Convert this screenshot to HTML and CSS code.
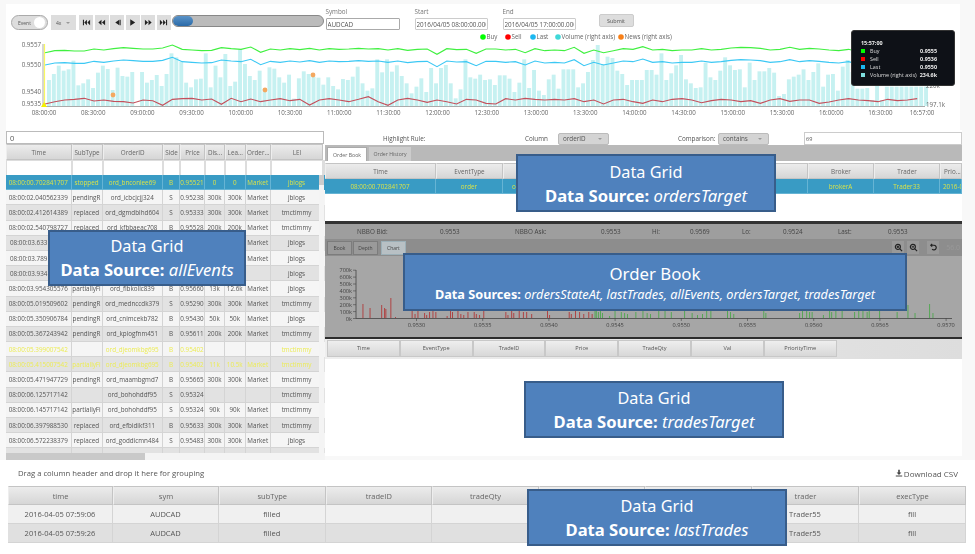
FILE: index.html
```html
<!doctype html>
<html>
  <head>
    <link rel="stylesheet" href="styles.css">
    <script src="charts.js" defer></script>
  </head>

  <body>
    <div class="app">
      <section class="top">
        <div class="toolbar">
          <div class="toggle"><span>Event</span><i></i></div>
          <div class="speed"><span>4x</span><b></b></div>
          <div class="controls">
            <button><svg viewBox="0 0 10 10"><path d="M1 2h1.2v6H1zM5.500 2v6L2.500 5zM9 2v6L6 5z"/></svg></button>
            <button><svg viewBox="0 0 10 10"><path d="M5 2v6L1.500 5zM9 2v6L5.500 5z"/></svg></button>
            <button><svg viewBox="0 0 10 10"><path d="M7 2v6L2.500 5zM7.500 2h1v6h-1z"/></svg></button>
            <button><svg viewBox="0 0 10 10"><path d="M2.500 1.500v7L8 5z"/></svg></button>
            <button><svg viewBox="0 0 10 10"><path d="M1 2v6L4.500 5zM5 2v6L8.500 5z"/></svg></button>
            <button><svg viewBox="0 0 10 10"><path d="M1 2v6L4 5zM4.500 2v6l3-3zM7.800 2H9v6H7.800z"/></svg></button>
          </div>
          <div class="slider"><i></i></div>
          <label class="field field-symbol">Symbol<input type="text" value="AUDCAD"></label>
          <label class="field field-start">Start<input type="text" value="2016/04/05 08:00:00.000"></label>
          <label class="field field-end">End<input type="text" value="2016/04/05 17:00:00.000"></label>
          <button class="submit">Submit</button>
        </div>
        <svg id="mainChart" class="main-chart" viewBox="6 32 954 98"></svg>
        <div class="tip">
          <strong>15:57:00</strong>
          <div><i class="sw-buy"></i><span>Buy</span><b>0.9555</b></div>
          <div><i class="sw-sell"></i><span>Sell</span><b>0.9536</b></div>
          <div><i class="sw-last"></i><span>Last</span><b>0.9550</b></div>
          <div><i class="sw-vol"></i><span>Volume (right axis)</span><b>234.6k</b></div>
        </div>
      </section>

      <div class="middle">
        <section class="events">
          <input class="search" type="text" value="0">
          <div class="grid-head ev-cols">
            <div>Time</div><div>SubType</div><div>OrderID</div><div>Side</div><div>Price</div><div>Dis...</div><div>Lea...</div><div>Order...</div><div>LEI</div>
          </div>
          <div class="filters ev-cols">
            <div><input></div><div><input></div><div><input></div><div><input></div><div><input></div><div><input></div><div><input></div><div><input></div><div><input></div>
          </div>
          <div class="ev-body">
            <div class="row ev-cols selected"><div>08:00:00.702841707</div><div>stopped</div><div>ord_bnconlee69</div><div>B</div><div>0.95521</div><div>0</div><div>0</div><div>Market</div><div>jblogs</div></div>
            <div class="row ev-cols"><div>08:00:02.040562339</div><div>pendingR</div><div>ord_icbcjcjj324</div><div>S</div><div>0.95238</div><div>300k</div><div>300k</div><div>Market</div><div>jblogs</div></div>
            <div class="row ev-cols"><div>08:00:02.412614389</div><div>replaced</div><div>ord_dgmdblhd604</div><div>S</div><div>0.95333</div><div>300k</div><div>300k</div><div>Market</div><div>tmctimmy</div></div>
            <div class="row ev-cols"><div>08:00:02.540798727</div><div>replaced</div><div>ord_kfbbaeac708</div><div>B</div><div>0.95528</div><div>200k</div><div>200k</div><div>Market</div><div>tmctimmy</div></div>
            <div class="row ev-cols"><div class="left cut">08:00:03.633</div><div></div><div></div><div></div><div></div><div></div><div></div><div>Market</div><div>jblogs</div></div>
            <div class="row ev-cols"><div class="left cut">08:00:03.789</div><div></div><div></div><div></div><div></div><div></div><div></div><div>Market</div><div>jblogs</div></div>
            <div class="row ev-cols"><div class="left cut">08:00:03.934</div><div></div><div></div><div></div><div></div><div></div><div></div><div></div><div>jblogs</div></div>
            <div class="row ev-cols"><div>08:00:03.954305576</div><div>partiallyFi</div><div>ord_fibkolic839</div><div>B</div><div>0.95660</div><div>13k</div><div>12.6k</div><div>Market</div><div>jblogs</div></div>
            <div class="row ev-cols"><div>08:00:05.019509602</div><div>pendingR</div><div>ord_mednccdk379</div><div>S</div><div>0.95290</div><div>300k</div><div>300k</div><div>Market</div><div>tmctimmy</div></div>
            <div class="row ev-cols"><div>08:00:05.350906784</div><div>pendingR</div><div>ord_cnimcekb782</div><div>B</div><div>0.95430</div><div>50k</div><div>50k</div><div>Market</div><div>jblogs</div></div>
            <div class="row ev-cols"><div>08:00:05.367243942</div><div>pendingR</div><div>ord_kpiogfnm451</div><div>B</div><div>0.95611</div><div>200k</div><div>200k</div><div>Market</div><div>tmctimmy</div></div>
            <div class="row ev-cols hit"><div>08:00:05.399007542</div><div></div><div>ord_djeomkbg695</div><div>B</div><div>0.95402</div><div></div><div></div><div></div><div>tmctimmy</div></div>
            <div class="row ev-cols hit"><div>08:00:05.415007542</div><div>partiallyFi</div><div>ord_djeomkbg695</div><div>B</div><div>0.95402</div><div>11k</div><div>10.5k</div><div>Market</div><div>tmctimmy</div></div>
            <div class="row ev-cols"><div>08:00:05.471947729</div><div>pendingR</div><div>ord_maambgmd7</div><div>B</div><div>0.95665</div><div>300k</div><div>300k</div><div>Market</div><div>tmctimmy</div></div>
            <div class="row ev-cols"><div>08:00:06.125717142</div><div></div><div>ord_bohohddf95</div><div>S</div><div>0.95324</div><div></div><div></div><div></div><div>tmctimmy</div></div>
            <div class="row ev-cols"><div>08:00:06.145717142</div><div>partiallyFi</div><div>ord_bohohddf95</div><div>S</div><div>0.95324</div><div>90k</div><div>90k</div><div>Market</div><div>tmctimmy</div></div>
            <div class="row ev-cols"><div>08:00:06.397988530</div><div>replaced</div><div>ord_efbidikf311</div><div>B</div><div>0.95633</div><div>300k</div><div>300k</div><div>Market</div><div>tmctimmy</div></div>
            <div class="row ev-cols"><div>08:00:06.572238379</div><div>replaced</div><div>ord_goddicmn484</div><div>S</div><div>0.95483</div><div>300k</div><div>300k</div><div>Market</div><div>jblogs</div></div>
            <div class="row ev-cols last-row"><div></div><div></div><div></div><div></div><div></div><div></div><div></div><div></div><div></div></div>
            <div class="vscroll"><i></i></div>
          </div>
          <div class="hscroll"><i></i></div>
        </section>

        <section class="detail">
          <div class="rule">
            <span class="rule-title">Highlight Rule:</span>
            <span class="rule-col">Column</span>
            <div class="pick pick-col"><span>orderID</span><b></b></div>
            <span class="rule-cmp">Comparison:</span>
            <div class="pick"><span>contains</span><b></b></div>
            <input class="rule-val" type="text" value="69">
          </div>
          <div class="tabs">
            <div class="tab active">Order Book</div>
            <div class="tab">Order History</div>
          </div>
          <div class="grid-head or-cols">
            <div>Time</div><div>EventType</div><div></div><div></div><div></div><div>Broker</div><div>Trader</div><div class="left">Prio...</div>
          </div>
          <div class="row or-cols selected">
            <div>08:00:00.702841707</div><div>order</div><div class="left peek">or</div><div></div><div></div><div>brokerA</div><div>Trader33</div><div class="left">2016-0</div>
          </div>
          <div class="blank"></div>
          <div class="book">
            <div class="nbbo">
              <span class="n1">NBBO Bid:</span><span class="n2">0.9553</span>
              <span class="n3">NBBO Ask:</span><span class="n4">0.9553</span>
              <span class="n5">Hi:</span><span class="n6">0.9569</span>
              <span class="n7">Lo:</span><span class="n8">0.9524</span>
              <span class="n9">Last:</span><span class="n10">0.9553</span>
            </div>
            <div class="book-tabs">
              <div class="btab">Book</div>
              <div class="btab">Depth</div>
              <div class="btab active">Chart</div>
              <div class="tools">
                <button><svg viewBox="0 0 10 10"><circle cx="4.300" cy="4.300" r="2.800"/><path d="M6.500 6.500L9 9M3 4.300h2.600M4.300 3v2.600"/></svg></button>
                <button><svg viewBox="0 0 10 10"><circle cx="4.300" cy="4.300" r="2.800"/><path d="M6.500 6.500L9 9M3 4.300h2.600"/></svg></button>
                <button class="undo"><svg viewBox="0 0 10 10"><path d="M3 2.500h2.500a2.600 2.600 0 1 1-2 4.300M3.500 1L2 2.500 3.500 4"/></svg></button>
                <span>56.0</span>
              </div>
            </div>
            <svg id="bookChart" class="book-chart" viewBox="325 256 637 80"></svg>
          </div>
          <div class="trade-head">
            <div>Time</div><div>EventType</div><div>TradeID</div><div>Price</div><div>TradeQty</div><div>Val</div><div>PriorityTime</div>
          </div>
        </section>
      </div>

      <section class="bottom">
        <div class="group-bar">
          <span>Drag a column header and drop it here for grouping</span>
          <span class="csv"><svg viewBox="0 0 10 10"><path d="M4 1h2v3.500h2L5 7.500 2 4.500h2zM1 8h8v1.500H1z"/></svg>Download CSV</span>
        </div>
        <div class="grid-head lt-cols">
          <div>time</div><div>sym</div><div>subType</div><div>tradeID</div><div>tradeQty</div><div></div><div></div><div>trader</div><div>execType</div>
        </div>
        <div class="row lt-cols">
          <div>2016-04-05 07:59:06</div><div>AUDCAD</div><div>filled</div><div></div><div></div><div></div><div></div><div>Trader55</div><div>fill</div>
        </div>
        <div class="row lt-cols">
          <div>2016-04-05 07:59:26</div><div>AUDCAD</div><div>filled</div><div></div><div></div><div></div><div></div><div>Trader55</div><div>fill</div>
        </div>
      </section>

      <div class="callout c-events">Data Grid<p><b>Data Source:</b> <em>allEvents</em></p></div>
      <div class="callout c-orders">Data Grid<p><b>Data Source:</b> <em>ordersTarget</em></p></div>
      <div class="callout c-book">Order Book<p><b>Data Sources:</b> <em>ordersStateAt, lastTrades, allEvents, ordersTarget, tradesTarget</em></p></div>
      <div class="callout c-trades">Data Grid<p><b>Data Source:</b> <em>tradesTarget</em></p></div>
      <div class="callout c-last">Data Grid<p><b>Data Source:</b> <em>lastTrades</em></p></div>
    </div>
  </body>
</html>
```

FILE: styles.css
```css
* {
  box-sizing: border-box;
  margin: 0;
  padding: 0;
}

body {
  font-family: "Open Sans", "Noto Sans", sans-serif;
  font-size: 6.3px;
  color: #555;
  background-color: #f8f8f8;
  width: 975px;
  height: 554px;
  overflow: hidden;
}

input {
  font-family: inherit;
  color: #555;
  background: #fff;
  outline: none;
}

button {
  font-family: inherit;
}

.app {
  position: relative;
  width: 975px;
  height: 554px;
  padding-top: 4px;
}

/* the source capture is a soft, downscaled image */
.top,
.middle,
.bottom {
  filter: blur(0.35px);
}

/* top strip */
.top {
  position: relative;
  height: 126px;
  margin: 0 15px 0 6px;
  background-color: #fff;
}

.toolbar {
  display: flex;
  align-items: flex-start;
  height: 28px;
  padding: 3px 0 0 5px;
}

.toggle {
  display: flex;
  align-items: center;
  justify-content: space-between;
  width: 37px;
  height: 15px;
  margin-top: 8px;
  padding: 0 2px 0 6px;
  font-size: 5px;
  background: #ddd;
  border: 1.500px solid #aaa;
  border-radius: 8px;
}

.toggle i {
  width: 11px;
  height: 11px;
  border-radius: 50%;
  background: #fff;
}

.speed {
  display: flex;
  align-items: center;
  justify-content: space-between;
  width: 25px;
  height: 15px;
  margin: 8px 0 0 3px;
  padding: 0 6px 0 5px;
  font-size: 5px;
  background: #ddd;
}

.speed b,
.pick b {
  border-left: 2px solid transparent;
  border-right: 2px solid transparent;
  border-top: 2px solid #999;
}

.controls {
  display: flex;
  gap: 1.500px;
  margin: 8px 0 0 3px;
}

.controls button {
  display: flex;
  align-items: center;
  justify-content: center;
  width: 14px;
  height: 15px;
  border: none;
  background: #ddd;
}

.controls svg {
  width: 9px;
  height: 9px;
  fill: #222;
}

.slider {
  width: 152px;
  height: 12px;
  margin: 8px 0 0 1px;
  background: #bbb;
  border: 1px solid #888;
  border-radius: 6px;
  overflow: hidden;
}

.slider i {
  display: block;
  width: 20px;
  height: 100%;
  background: linear-gradient(#5a93c8, #2a6aa8);
  border-radius: 5px;
}

.field {
  display: flex;
  flex-direction: column;
  gap: 2px;
  font-size: 6.300px;
  color: #777;
}

.field input {
  height: 12px;
  padding: 0 1px;
  font-size: 6.300px;
  border: 1px solid #ccc;
  border-radius: 1px;
}

.field-symbol {
  width: 74px;
  margin-left: 2px;
}

.field-symbol input {
  border-color: #aaa;
}

.field-start {
  width: 73px;
  margin-left: 15px;
}

.field-end {
  width: 73px;
  margin-left: 15px;
}

.submit {
  width: 35px;
  height: 13px;
  margin: 7px 0 0 23px;
  font-size: 5.500px;
  color: #555;
  background: #ddd;
  border: 1px solid #ccc;
  border-radius: 2px;
}

.main-chart {
  display: block;
  width: 954px;
  height: 98px;
}

.main-chart text {
  font-size: 6.200px;
  fill: #666;
}

.tip {
  position: absolute;
  left: 845px;
  top: 26px;
  width: 104px;
  height: 56px;
  padding: 8px 17px 0 9px;
  font-size: 5.400px;
  color: #ddd;
  background: #0e1117;
  border: 1px solid #333;
  border-radius: 3px;
}

.tip strong {
  display: block;
  color: #eee;
  height: 8px;
}

.tip div {
  display: flex;
  align-items: center;
  height: 8.100px;
}

.tip i {
  width: 4px;
  height: 4px;
  margin-right: 5px;
}

.tip span {
  flex: 1;
}

.tip b {
  color: #eee;
}

.sw-buy { background: #0f0; }
.sw-sell { background: #f00; }
.sw-last { background: #1cb8f0; }
.sw-vol { background: #7fe0e0; }

/* shared grid bits */
.grid-head,
.row {
  display: grid;
}

.grid-head > div,
.row > div {
  display: flex;
  align-items: center;
  justify-content: center;
  overflow: hidden;
  white-space: nowrap;
}

.grid-head > div {
  background: linear-gradient(#ececec, #d6d6d6);
  border: 1px solid #c4c4c4;
  border-left-color: #eee;
  color: #666;
}

.row > div {
  border-right: 1px solid #d4d4d4;
  border-bottom: 1px solid #d4d4d4;
}

.row:nth-child(odd) { background: #e2e2e2; }
.row:nth-child(even) { background: #f5f5f5; }

.row.selected {
  background: #399bc4;
  color: #d8e24a;
}

.row.selected > div {
  border-color: #66b4d4;
}

.row.hit {
  color: #ecec55;
}

.grid-head > .left,
.row > .left {
  justify-content: flex-start;
  padding-left: 3px;
}

.row > .cut {
  padding-left: 4px;
}

.row > .peek {
  padding-left: 9px;
}

/* middle */
.middle {
  display: flex;
  height: 330px;
}

.events {
  width: 319px;
  margin-left: 6px;
  flex: none;
  background: #fff;
}

.search {
  display: block;
  width: 318px;
  height: 13px;
  margin-top: 1px;
  padding: 0 3px;
  font-size: 7.500px;
  border: 1px solid #bbb;
}

.ev-cols {
  grid-template-columns: 65.500px 31px 60.500px 17px 25px 20px 20.500px 25.500px 52px;
}

.events .grid-head {
  height: 16px;
}

.filters {
  display: grid;
  height: 15px;
  width: 319px;
  background: #ddd;
}

.filters div {
  padding: 1px;
}

.filters input {
  display: block;
  width: 100%;
  height: 100%;
  border: none;
  background: #fff;
}

.ev-body {
  position: relative;
  height: 278px;
  overflow: hidden;
}

.ev-body .row {
  height: 15.200px;
}

.vscroll {
  position: absolute;
  right: 1px;
  top: 0;
  width: 5px;
  height: 100%;
  background: #f4f4f4;
}

.vscroll i {
  display: block;
  height: 10px;
  background: #ccc;
}

.hscroll {
  height: 7px;
  background: #f4f4f4;
}

.hscroll i {
  display: block;
  width: 139px;
  height: 100%;
  background: #c9c9c9;
}

/* right side */
.detail {
  width: 637px;
  margin-left: 0;
  flex: none;
  height: 326px;
  background: #fff;
}

.rule {
  display: flex;
  align-items: center;
  height: 15px;
  padding-top: 2px;
  background: #fff;
}

.rule span {
  font-size: 6.300px;
}

.rule-title {
  margin-left: 58px;
  width: 142px;
}

.rule-col {
  width: 33px;
}

.pick {
  display: flex;
  align-items: center;
  justify-content: space-between;
  width: 51px;
  height: 12px;
  padding: 0 6px 0 4px;
  font-size: 5.500px;
  background: #d4d4d4;
  border: 1px solid #bbb;
  border-radius: 2px;
}

.pick-col {
  margin-right: 69px;
}

.rule-cmp {
  width: 40px;
}

.rule-val {
  width: 158px;
  height: 13px;
  margin-left: 35px;
  padding: 0 1px;
  font-size: 5.500px;
  border: 1px solid #ccc;
}

.tabs {
  display: flex;
  align-items: flex-end;
  gap: 2px;
  height: 16px;
  padding-left: 2px;
  background: #b9b9b9;
}

.tab {
  display: flex;
  align-items: center;
  justify-content: center;
  width: 42px;
  height: 14px;
  font-size: 5.200px;
  background: #ccc;
  color: #666;
}

.tab.active {
  width: 40px;
  background: #fff;
  border: 1px solid #aaa;
  border-bottom: none;
}

.or-cols {
  grid-template-columns: 111px 67px 70px 70px 165px 66px 66px 22px;
}

.detail > .grid-head {
  height: 16px;
  margin-top: 2px;
}

.detail > .row {
  height: 15px;
}

.blank {
  height: 30px;
  background: #fff;
  border-bottom: 3px solid #333;
}

.book {
  height: 114.500px;
  background: #a6a6a6;
  border-bottom: 2.500px solid #2c2c2c;
  color: #444;
}

.nbbo {
  position: relative;
  height: 15px;
  background: #9e9e9e;
}

.nbbo span {
  position: absolute;
  top: 3px;
}

.n1 { left: 32px; }
.n2 { left: 115px; }
.n3 { left: 190px; }
.n4 { left: 276px; }
.n5 { left: 327px; }
.n6 { left: 365px; }
.n7 { left: 417px; }
.n8 { left: 458px; }
.n9 { left: 513px; }
.n10 { left: 563px; }

.book-tabs {
  display: flex;
  align-items: flex-end;
  gap: 1px;
  height: 17px;
  padding-left: 2px;
  background: #8d8d8d;
}

.btab {
  display: flex;
  align-items: center;
  justify-content: center;
  width: 25px;
  height: 14px;
  font-size: 5px;
  background: #9a9a9a;
  border: 1px solid #7c7c7c;
  margin-bottom: 1px;
}

.btab.active {
  margin-left: 2px;
  background: #b8c0c4;
  border-color: #9cb0b8;
}

.tools {
  display: flex;
  align-items: center;
  gap: 3px;
  height: 100%;
  margin-left: auto;
  padding-right: 2px;
}

.tools button {
  display: flex;
  align-items: center;
  justify-content: center;
  width: 12px;
  height: 13px;
  background: #999;
  border: none;
}

.tools button.undo {
  margin-left: 5px;
}

.tools svg {
  width: 9px;
  height: 9px;
  fill: none;
  stroke: #222;
  stroke-width: 1.300;
}

.tools span {
  margin-left: 4px;
  font-size: 7px;
  color: #999;
}

.book-chart {
  display: block;
  width: 637px;
  height: 80px;
}

.book-chart text {
  font-size: 5.600px;
  fill: #444;
}

.trade-head {
  display: flex;
  height: 20px;
  padding: 1px 0 2px 2px;
  background: linear-gradient(90deg, #eee, #ddd);
}

.trade-head div {
  display: flex;
  align-items: center;
  justify-content: center;
  width: 72.800px;
  font-size: 5.600px;
  background: linear-gradient(#eeeeee, #d8d8d8);
  border: 1px solid #c8c8c8;
}

/* bottom */
.bottom {
  height: 94px;
  margin-left: 0;
  background: #fff;
}

.group-bar {
  display: flex;
  justify-content: space-between;
  align-items: center;
  height: 26px;
  padding: 0 17px 0 18px;
  font-size: 7.700px;
  color: #555;
}

.csv {
  display: flex;
  align-items: center;
  gap: 1px;
  font-size: 8px;
}

.csv svg {
  width: 8px;
  height: 8px;
  fill: #444;
}

.bottom .grid-head,
.bottom .row {
  margin-left: 8px;
  width: 958px;
}

.lt-cols {
  grid-template-columns: 105px 106px 106.500px 106.500px 107px 106px 107px 107px 107px;
  font-size: 7.500px;
}

.bottom .grid-head {
  height: 19px;
}

.bottom .row {
  height: 19px;
}

.bottom .row:nth-child(odd) { background: #f0f0f0; }
.bottom .row:nth-child(even) { background: #e0e0e0; }

/* blue labels laid over the screenshot */
.callout {
  position: absolute;
  text-align: center;
  color: #fff;
  font-family: "Noto Sans", sans-serif;
  font-size: 16.300px;
  line-height: 24px;
  background: #4f81bd;
  border: 2px solid #385d8a;
}

.callout p {
  font-size: 16.600px;
  line-height: 23px;
}

.c-events { left: 48px; top: 230px; width: 198px; height: 56px; padding-top: 2px; }
.c-orders { left: 516px; top: 154px; width: 260px; height: 58px; padding-top: 4px; }
.c-book { left: 403px; top: 253px; width: 504px; height: 58px; padding-top: 7px; font-size: 16.800px; }
.c-book p { font-size: 12.700px; line-height: 16px; }
.c-trades { left: 524px; top: 381px; width: 260px; height: 57px; padding-top: 3px; }
.c-last { left: 527px; top: 489px; width: 260px; height: 57px; padding-top: 3px; }
```

FILE: charts.js
```js
const NS = "http://www.w3.org/2000/svg";

function add(svg, tag, attrs, text) {
  const el = document.createElementNS(NS, tag);
  for (const key in attrs) el.setAttribute(key, attrs[key]);
  if (text) el.textContent = text;
  svg.appendChild(el);
  return el;
}

// values below were read off the 3x crop, so divide by 3
const barTops = [
  240,222,197,212,208,182,256,250,238,264,218,197,207,270,203,228,230,216,318,216,
  248,240,225,258,222,160,172,185,248,262,238,236,160,262,197,232,162,258,245,148,
  192,228,240,212,266,202,206,232,248,224,296,235,214,222,230,233,254,232,258,268,
  237,240,230,200,250,272,265,178,217,178,215,196,228,250,280,260,235,276,204,250,
  204,195,250,295,268,178,232,236,224,240,238,255,226,226,236,276,248,178,264,210,
  272,285,238,224,266,208,208,208,262,250,216,180,135,192,170,174,212,222,255,240,
  240,240,210,210,224,160,240,220,196,165,238,250,264,262,188,232,240,212,172,196,
  210,208,262,188,240,214,214,204,218,288,282,238,230,224,208,240,216,190,260,224,
  222,272,200,180,216,266,266,264,300,240,300,260,260,260,260,260,260,260,260,260
];

const buy = [
  158,152,151,153,153,147,150,146,143,145,147,147,144,135,148,150,152,151,143,146,
  148,141,157,147,150,146,149,145,150,146,148,147,145,147,146,150,146,151,148,147,
  163,146,149,148,160,147,147,150,148,158,146,152,150,152,142,160,150,158,152,146,
  148,140,150,148,152,150,150,146,150,148,144,142,143,145,150,148,142,148,145,147,
  150,152,148,156,136,154,150,148,152,150
];

const sell = [
  312,305,300,298,295,303,300,304,305,309,300,302,316,298,296,295,300,297,313,295,
  305,297,305,300,296,302,298,315,300,296,300,305,298,290,305,316,300,295,300,307,
  300,305,312,298,300,310,312,296,300,295,298,300,298,300,296,305,300,312,300,298,
  305,310,300,305,298,296,300,308,302,298,300,305,302,310,300,296,304,300,300,310,
  306,300,296,300,302,305,298,302,300,296
];

function linePoints(values, shift) {
  return values.map((v, i) => (45 + i * 9.8) + "," + ((v + shift) / 3)).join(" ");
}

function drawMain() {
  const svg = document.getElementById("mainChart");

  barTops.forEach((top, i) => {
    const y = top / 3;
    if (y >= 106) return;
    add(svg, "rect", { x: 47 + i * 4.9, y: y, width: 3.9, height: 106 - y, fill: "#c6f1f1" });
  });

  add(svg, "polyline", { points: linePoints(sell, 0), fill: "none", stroke: "#c4505c", "stroke-width": 1.1 });
  add(svg, "polyline", { points: linePoints(buy, 37), fill: "none", stroke: "#3cc8f4", "stroke-width": 1.1 });
  add(svg, "polyline", { points: linePoints(buy, 0), fill: "none", stroke: "#40f040", "stroke-width": 1.1 });

  add(svg, "path", { d: "M43 44V106.500H925", fill: "none", stroke: "#aaa", "stroke-width": 1 });
  add(svg, "path", { d: "M44.500 44V104", stroke: "#f8f860", "stroke-width": 1.2 });
  add(svg, "path", { d: "M44 102l3 5h-6z", fill: "#f4f000" });

  [[113, 95], [265, 90], [313, 75]].forEach(([cx, cy]) => {
    add(svg, "circle", { cx: cx, cy: cy, r: 2.4, fill: "#f4a860" });
  });

  [["0.9557", 47], ["0.9550", 67], ["0.9540", 94], ["0.9535", 106]].forEach(([label, y]) => {
    add(svg, "text", { x: 41, y: y, "text-anchor": "end" }, label);
  });

  for (let i = 0; i < 18; i++) {
    const mins = i * 30;
    const h = String(8 + Math.floor(mins / 60)).padStart(2, "0");
    const m = mins % 60 === 0 ? "00" : "30";
    add(svg, "text", { x: 44 + i * 49.2, y: 114.5, "text-anchor": "middle" }, h + ":" + m + ":00");
  }
  add(svg, "text", { x: 922, y: 114.5, "text-anchor": "middle" }, "16:57:00");
  add(svg, "text", { x: 926, y: 88 }, "220k");
  add(svg, "text", { x: 926, y: 106.5 }, "197.1k");

  [[483, "#00ff00", "Buy"], [508, "#ff0000", "Sell"], [533, "#1cb8f0", "Last"],
   [558, "#40d8d8", "Volume (right axis)"], [621, "#f88018", "News (right axis)"]].forEach(([x, color, label]) => {
    add(svg, "circle", { cx: x, cy: 37, r: 2.8, fill: color });
    add(svg, "text", { x: x + 3.5, y: 39.2 }, label);
  });
}

// [x in 2.4x crop, height in px]
const redBars = [
  [90,14],[107,10],[135,13],[142,10],[145,9],[157,20],[168,1],[208,7],[215,4],[222,7],[238,5],[243,3],
  [250,6],[258,7],[265,6],[292,2],[300,7],[305,6],[318,7],[325,4],[332,3],[342,6],[357,6],[362,4],
  [370,3],[380,7],[433,6],[438,3],[447,7],[452,5],[465,7],[475,6],[483,6],[495,4],[533,7],[538,3],
  [585,6],[590,4],[600,7],[610,6],[620,4],[632,6],[640,4]
];

const greenBars = [
  [647,7],[650,7],[655,6],[660,7],[665,5],[682,2],[695,7],[710,6],[718,5],[725,4],[745,6],[762,7],
  [772,5],[780,4],[800,7],[815,7],[830,6],[862,7],[880,5],[893,3],[905,4],[915,7],[925,7],[965,7],
  [972,6],[980,4],[1052,7],[1057,5],[1138,5],[1145,7],[1155,7],[1162,6],[1168,6],[1195,3],[1210,7],
  [1215,6],[1225,7],[1240,7],[1270,6],[1280,7],[1290,7],[1300,6],[1305,7],[1330,7],[1372,6],[1398,13],
  [1415,5],[1450,14],[1458,5]
];

function drawBook() {
  const svg = document.getElementById("bookChart");
  const base = 318;

  redBars.forEach(([x, h]) => {
    add(svg, "rect", { x: 325 + x / 2.4, y: base - h, width: 0.9, height: h, fill: "#b03a3a" });
  });
  greenBars.forEach(([x, h]) => {
    add(svg, "rect", { x: 325 + x / 2.4, y: base - h, width: 0.9, height: h, fill: "#4ea84e" });
  });

  add(svg, "path", { d: "M356 270V318.500H952", fill: "none", stroke: "#444", "stroke-width": 0.8 });

  for (let i = 0; i < 8; i++) {
    const y = 318.5 - i * 6.9;
    add(svg, "path", { d: "M353 " + y + "h3", stroke: "#444", "stroke-width": 0.6 });
    add(svg, "text", { x: 352, y: y + 2, "text-anchor": "end" }, i * 100 + "k");
  }

  for (let i = 0; i < 9; i++) {
    const x = 416.5 + i * 66.2;
    add(svg, "path", { d: "M" + x + " 318v3", stroke: "#444", "stroke-width": 0.6 });
    add(svg, "text", { x: x, y: 327, "text-anchor": "middle" }, (0.953 + i * 0.0005).toFixed(4));
  }
}

drawMain();
drawBook();
```
